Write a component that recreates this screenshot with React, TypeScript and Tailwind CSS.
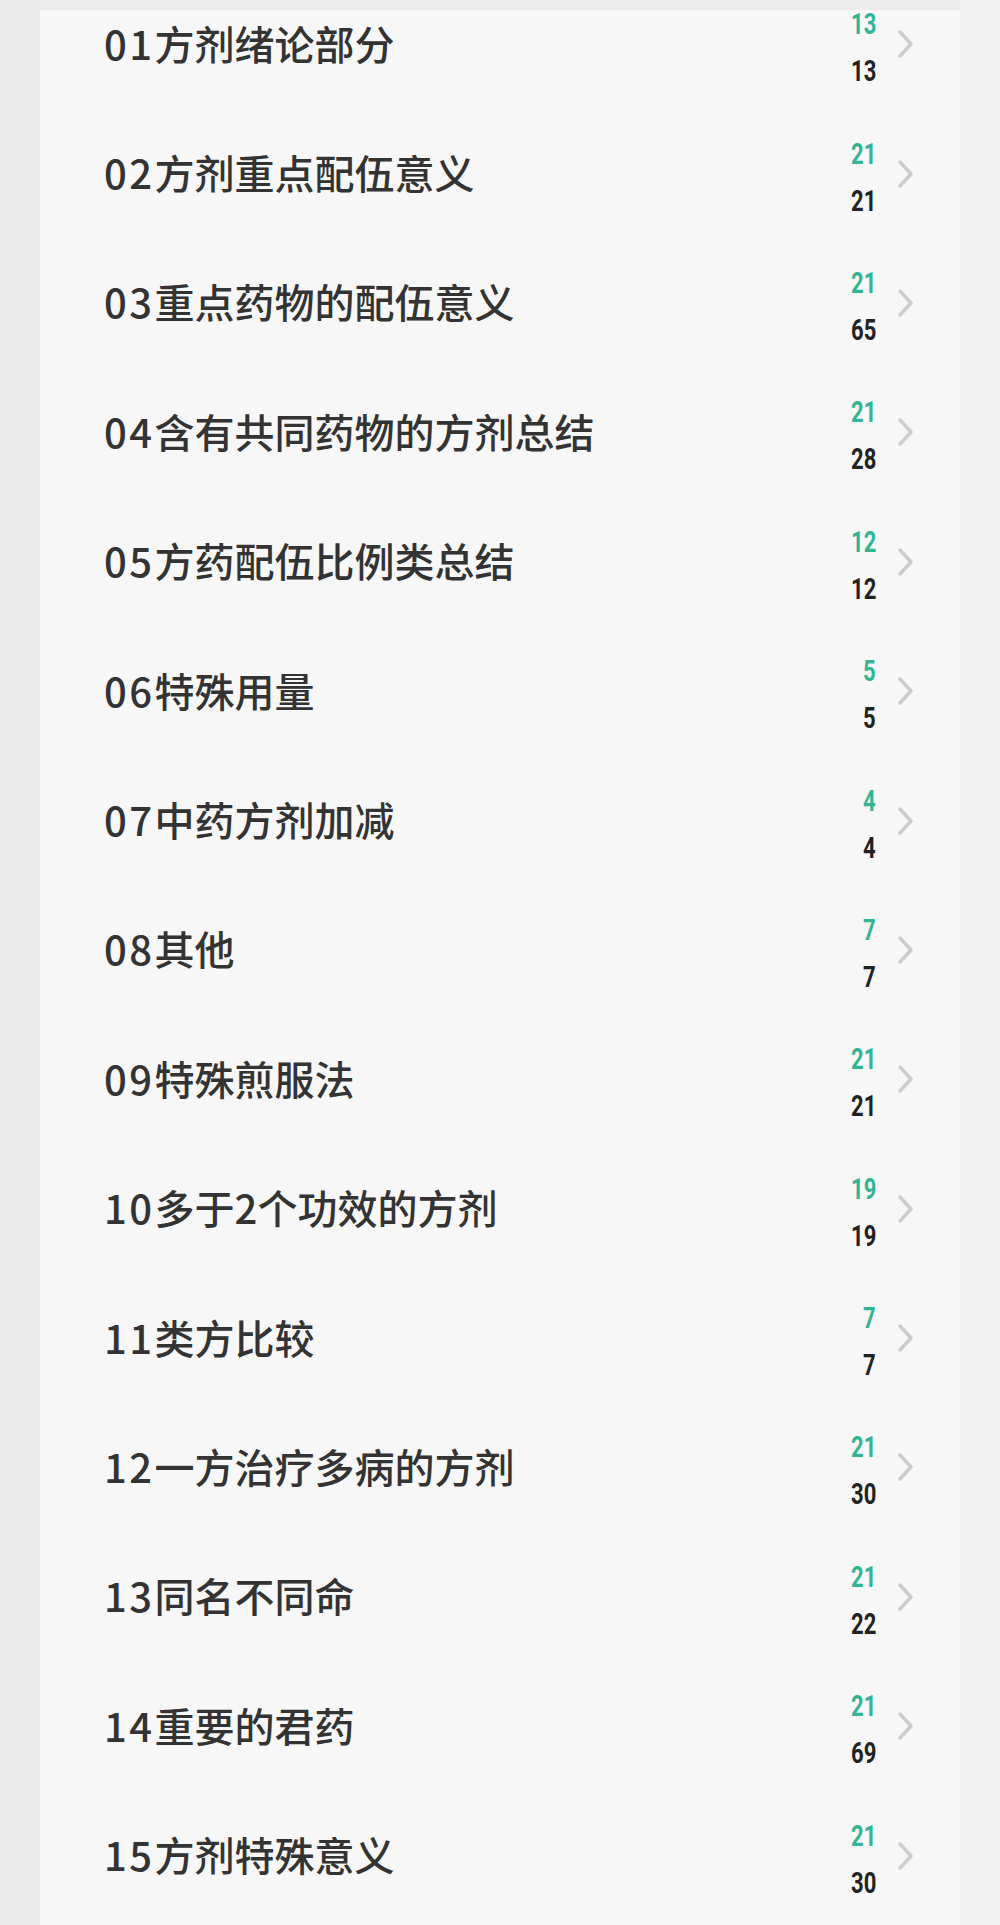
const chapters = [
  { no: "01", title: "方剂绪论部分", done: 13, total: 13 },
  { no: "02", title: "方剂重点配伍意义", done: 21, total: 21 },
  { no: "03", title: "重点药物的配伍意义", done: 21, total: 65 },
  { no: "04", title: "含有共同药物的方剂总结", done: 21, total: 28 },
  { no: "05", title: "方药配伍比例类总结", done: 12, total: 12 },
  { no: "06", title: "特殊用量", done: 5, total: 5 },
  { no: "07", title: "中药方剂加减", done: 4, total: 4 },
  { no: "08", title: "其他", done: 7, total: 7 },
  { no: "09", title: "特殊煎服法", done: 21, total: 21 },
  { no: "10", title: "多于2个功效的方剂", done: 19, total: 19 },
  { no: "11", title: "类方比较", done: 7, total: 7 },
  { no: "12", title: "一方治疗多病的方剂", done: 21, total: 30 },
  { no: "13", title: "同名不同命", done: 21, total: 22 },
  { no: "14", title: "重要的君药", done: 21, total: 69 },
  { no: "15", title: "方剂特殊意义", done: 21, total: 30 },
];

function Chevron() {
  return (
    <svg viewBox="0 0 18 30" className="w-[18px] h-[30px]" fill="none" stroke="#cdcdcd" strokeWidth={3.5} strokeLinecap="round" strokeLinejoin="round">
      <path d="M4 3l11 12L4 27" />
    </svg>
  );
}

export default function App() {
  return (
    <div className="h-[1925px] w-[1000px] overflow-hidden bg-[#ececec] flex">
      <div className="w-[40px] bg-[#ebebeb]" />
      <div className="mt-[10px] w-[920px] bg-[#f7f7f7] overflow-hidden">
        <ul className="-mt-[32px]">
          {chapters.map((c) => (
            <li key={c.no} className="h-[129.4px] flex items-center pl-[64px] pr-[46px]">
              <span className="flex-1 text-[40px] font-medium text-[#333] font-['Noto_Sans_CJK_SC',sans-serif] leading-none">
                <span className="tracking-[2.5px]">{c.no}</span>
                {c.title}
              </span>
              <div className="flex flex-col items-end w-[60px] gap-[25px] pt-[10px] font-['Roboto',sans-serif] font-bold text-[29px] leading-[22px]">
                <span className="inline-block origin-right scale-x-[0.76] text-[#33b593]">{c.done}</span>
                <span className="inline-block origin-right scale-x-[0.76] text-[#222]">{c.total}</span>
              </div>
              <div className="ml-[20px] mt-[3px]">
                <Chevron />
              </div>
            </li>
          ))}
        </ul>
      </div>
      <div className="flex-1 bg-[#f2f2f2]" />
    </div>
  );
}
